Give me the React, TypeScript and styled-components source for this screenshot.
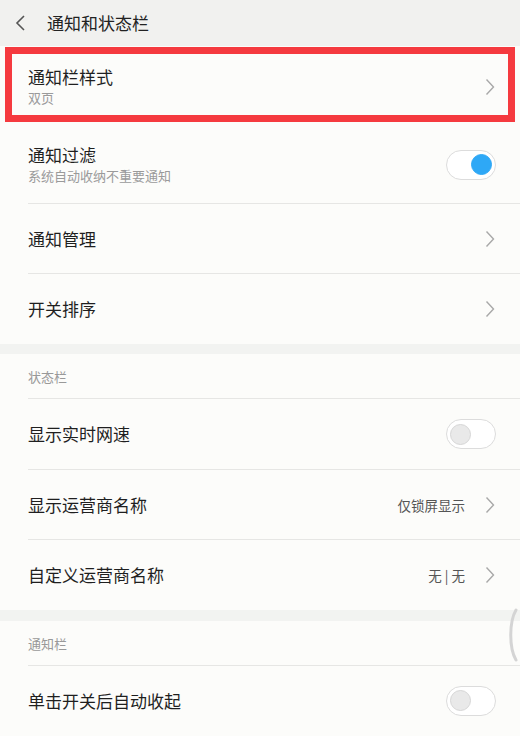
import React from "react";
import styled, { createGlobalStyle } from "styled-components";

const Global = createGlobalStyle`
  html, body { margin: 0; padding: 0; background: #fcfcfa; }
  body { font-family: "Noto Sans CJK SC", "Noto Sans", sans-serif; }
  * { box-sizing: border-box; }
`;

const Page = styled.div`
  position: relative;
  width: 520px;
  height: 736px;
  overflow: hidden;
  background: #fcfcfa;
`;

const Header = styled.header`
  height: 46px;
  display: flex;
  align-items: center;
  gap: 21px;
  padding-left: 15px;
  background: #f1f1ef;
`;

const HeaderTitle = styled.h1`
  margin: 0;
  font-size: 17px;
  font-weight: 400;
  color: #222;
  line-height: 22px;
`;

const Row = styled.div<{ $h: number; $divider?: boolean; $shift?: number }>`
  position: relative;
  height: ${(p) => p.$h}px;
  margin-left: 28px;
  padding-right: 25px;
  padding-top: ${(p) => p.$shift ?? 0}px;
  display: flex;
  align-items: center;
  border-bottom: 1px solid ${(p) => (p.$divider ? "#e6e6e4" : "transparent")};
`;

const Texts = styled.div`
  flex: 1;
  display: flex;
  flex-direction: column;
  gap: 3px;
`;

const Title = styled.div`
  font-size: 17px;
  line-height: 20px;
  color: #1f1f1f;
`;

const Sub = styled.div`
  font-size: 13px;
  line-height: 16px;
  color: #9a9a9a;
`;

const Value = styled.span`
  font-size: 13.5px;
  color: #555;
  margin-right: 20px;
`;

const Gap = styled.div<{ $h: number }>`
  height: ${(p) => p.$h}px;
  background: #f2f3f1;
`;

const SectionHeader = styled.div`
  height: 45px;
  margin-left: 28px;
  display: flex;
  align-items: center;
  font-size: 13px;
  color: #999;
  border-bottom: 1px solid #e6e6e4;
  padding-top: 1px;
`;

const Highlight = styled.div`
  position: absolute;
  top: 1px;
  left: -23px;
  right: 5px;
  bottom: 1px;
  border: 7px solid #f53a3f;
  pointer-events: none;
`;

const Track = styled.div<{ $on?: boolean }>`
  width: 50px;
  height: 30px;
  border-radius: 15px;
  border: 1px solid #dcdcdc;
  background: #fff;
  display: flex;
  align-items: center;
  justify-content: ${(p) => (p.$on ? "flex-end" : "flex-start")};
  padding: 0 3px;
  margin-right: -1px;
`;

const Thumb = styled.div<{ $on?: boolean }>`
  width: 21px;
  height: 21px;
  border-radius: 50%;
  background: ${(p) => (p.$on ? "#2ea8f6" : "#e9e9e9")};
  border: 1px solid ${(p) => (p.$on ? "#2ea8f6" : "#d6d6d6")};
`;

const EdgeGlow = styled.svg`
  position: absolute;
  right: 2px;
  top: 608px;
`;

const Chevron = () => (
  <svg width="10" height="18" viewBox="0 0 10 18">
    <polyline points="1.5,1.5 8.5,9 1.5,16.5" fill="none" stroke="#a8a8a8" strokeWidth="1.4" />
  </svg>
);

const Back = () => (
  <svg width="11" height="16" viewBox="0 0 11 16">
    <polyline points="9,1 2,8 9,15" fill="none" stroke="#555" strokeWidth="1.6" />
  </svg>
);

const Switch = ({ on }: { on?: boolean }) => (
  <Track $on={on}>
    <Thumb $on={on} />
  </Track>
);

export default function App() {
  return (
    <Page>
      <Global />
      <Header>
        <Back />
        <HeaderTitle>通知和状态栏</HeaderTitle>
      </Header>

      <Row $h={78} $shift={4}>
        <Texts>
          <Title>通知栏样式</Title>
          <Sub>双页</Sub>
        </Texts>
        <Chevron />
        <Highlight />
      </Row>
      <Row $h={80} $divider $shift={2}>
        <Texts>
          <Title>通知过滤</Title>
          <Sub>系统自动收纳不重要通知</Sub>
        </Texts>
        <Switch on />
      </Row>
      <Row $h={70} $divider>
        <Texts>
          <Title>通知管理</Title>
        </Texts>
        <Chevron />
      </Row>
      <Row $h={70}>
        <Texts>
          <Title>开关排序</Title>
        </Texts>
        <Chevron />
      </Row>

      <Gap $h={10} />
      <SectionHeader>状态栏</SectionHeader>
      <Row $h={71} $divider>
        <Texts>
          <Title>显示实时网速</Title>
        </Texts>
        <Switch />
      </Row>
      <Row $h={70} $divider>
        <Texts>
          <Title>显示运营商名称</Title>
        </Texts>
        <Value>仅锁屏显示</Value>
        <Chevron />
      </Row>
      <Row $h={70}>
        <Texts>
          <Title>自定义运营商名称</Title>
        </Texts>
        <Value>无 | 无</Value>
        <Chevron />
      </Row>

      <Gap $h={11} />
      <SectionHeader>通知栏</SectionHeader>
      <Row $h={70}>
        <Texts>
          <Title>单击开关后自动收起</Title>
        </Texts>
        <Switch />
      </Row>

      <EdgeGlow width="12" height="54" viewBox="0 0 12 54">
        <path d="M10 2 C3 14, 3 40, 10 52" fill="none" stroke="#d4d4d4" strokeWidth="3" strokeLinecap="round" />
      </EdgeGlow>
    </Page>
  );
}
